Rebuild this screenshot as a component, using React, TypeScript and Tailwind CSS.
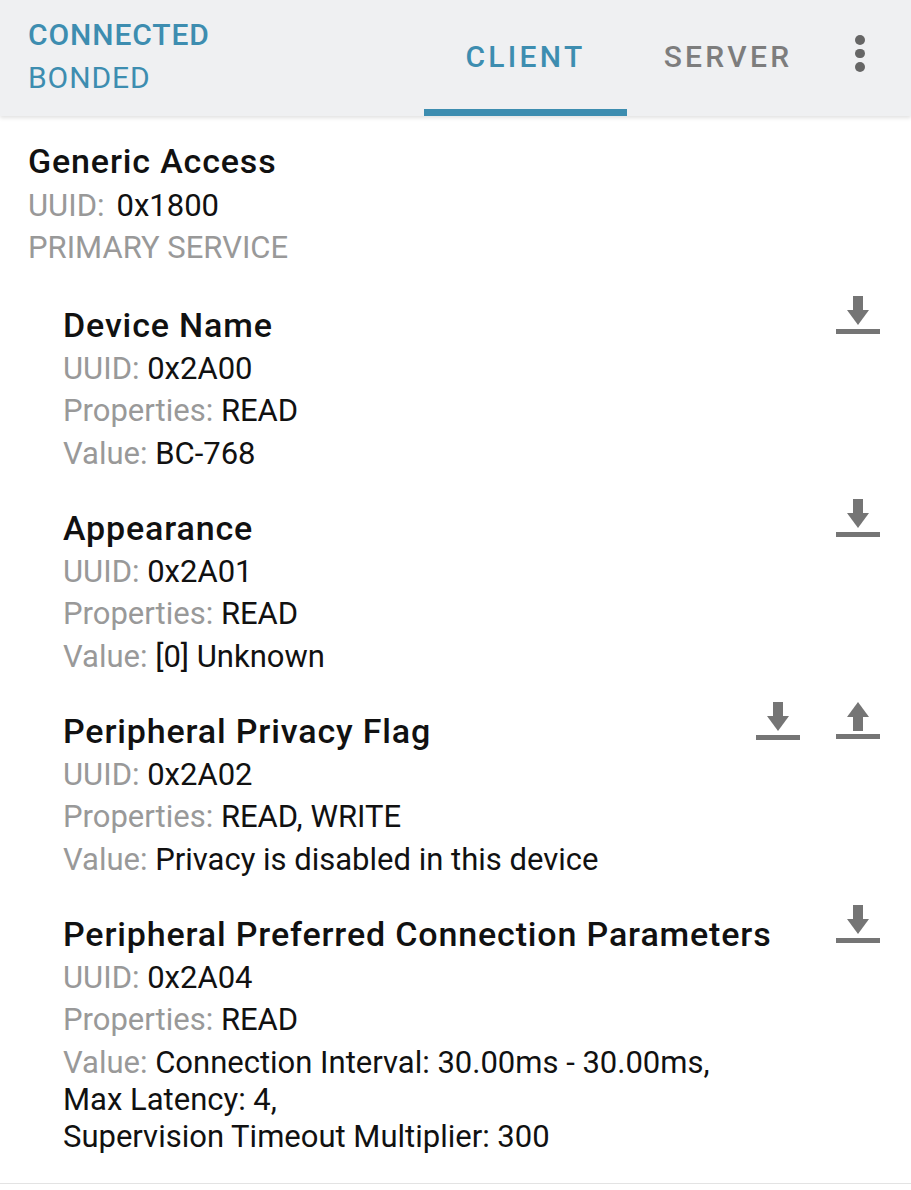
import React from "react";

const DownloadIcon = () => (
  <svg width="44" height="38" viewBox="0 0 44 38" className="block">
    <rect x="17" y="0" width="10" height="15" fill="#757575" />
    <polygon points="11,14 33,14 22,29" fill="#757575" />
    <rect x="0" y="33" width="44" height="5" fill="#757575" />
  </svg>
);

const UploadIcon = () => (
  <svg width="44" height="38" viewBox="0 0 44 38" className="block">
    <polygon points="22,0 33,15 11,15" fill="#757575" />
    <rect x="17" y="14" width="10" height="15" fill="#757575" />
    <rect x="0" y="32" width="44" height="5" fill="#757575" />
  </svg>
);

type Char = {
  name: string;
  uuid: string;
  props: string;
  value: string[];
  write?: boolean;
};

const chars: Char[] = [
  { name: "Device Name", uuid: "0x2A00", props: "READ", value: ["BC-768"] },
  { name: "Appearance", uuid: "0x2A01", props: "READ", value: ["[0] Unknown"] },
  {
    name: "Peripheral Privacy Flag",
    uuid: "0x2A02",
    props: "READ, WRITE",
    value: ["Privacy is disabled in this device"],
    write: true,
  },
  {
    name: "Peripheral Preferred Connection Parameters",
    uuid: "0x2A04",
    props: "READ",
    value: [
      "Connection Interval: 30.00ms - 30.00ms,",
      "Max Latency: 4,",
      "Supervision Timeout Multiplier: 300",
    ],
  },
];

export default function App() {
  return (
    <div
      className="w-[911px] h-[1190px] bg-white overflow-hidden"
      style={{ fontFamily: "Roboto, 'Noto Sans', sans-serif" }}
    >
      {/* Header */}
      <div className="relative h-[116px] bg-[#eff0f2] flex items-stretch shadow-[0_2px_4px_rgba(0,0,0,0.12)] z-10">
        <div className="flex flex-col justify-center pl-[28px] pb-[5px] w-[424px]">
          <div className="text-[30px] leading-[43px] font-medium text-[#3d8db0] tracking-[0.03em]">CONNECTED</div>
          <div className="text-[30px] leading-[43px] text-[#3d8db0] tracking-[0.03em]">BONDED</div>
        </div>
        <div className="relative w-[203px] flex items-center justify-center pb-[4px]">
          <span className="text-[30px] font-medium tracking-[0.11em] text-[#3d8db0]">CLIENT</span>
          <div className="absolute left-0 right-0 bottom-0 h-[7px] bg-[#3d8db0]" />
        </div>
        <div className="w-[202px] flex items-center justify-center pb-[4px]">
          <span className="text-[30px] font-medium tracking-[0.11em] text-[#7d7d7d]">SERVER</span>
        </div>
        <div className="flex-1 flex flex-col items-center justify-center gap-[4px] pr-[20px] pb-[9px]">
          <span className="block w-[9.5px] h-[9.5px] rounded-full bg-[#666]" />
          <span className="block w-[9.5px] h-[9.5px] rounded-full bg-[#666]" />
          <span className="block w-[9.5px] h-[9.5px] rounded-full bg-[#666]" />
        </div>
      </div>

      {/* Content */}
      <div className="border-b border-[#e3e3e3] pb-[28px] pt-[23px]">
        <div className="pl-[28px]">
          <div className="text-[34px] leading-[44px] font-medium text-[#111] tracking-[0.025em]">Generic Access</div>
          <div className="text-[31px] leading-[42px] mt-[2px]">
            <span className="text-[#999]">UUID:</span>
            <span className="text-[#111] ml-[12px]">0x1800</span>
          </div>
          <div className="text-[31px] leading-[42px] text-[#999]">PRIMARY SERVICE</div>
        </div>

        <div className="mt-[34px] flex flex-col gap-[34px]">
          {chars.map((c) => (
            <div key={c.name} className="flex pl-[63px] pr-[31px]">
              <div className="flex-1">
                <div className="text-[34px] leading-[44px] font-medium text-[#111] tracking-[0.025em]">{c.name}</div>
                <div className="text-[31px] leading-[42px] mt-[1px]">
                  <span className="text-[#999]">UUID: </span>
                  <span className="text-[#111]">{c.uuid}</span>
                </div>
                <div className="text-[31px] leading-[42px]">
                  <span className="text-[#999]">Properties: </span>
                  <span className="text-[#111]">{c.props}</span>
                </div>
                <div className="text-[31px] leading-[37px] pt-[3px]">
                  {c.value.map((v, i) => (
                    <div key={i}>
                      {i === 0 && <span className="text-[#999]">Value: </span>}
                      <span className="text-[#111]">{v}</span>
                    </div>
                  ))}
                </div>
              </div>
              <div className="flex gap-[36px] mt-[-7px]">
                <DownloadIcon />
                {c.write && <UploadIcon />}
              </div>
            </div>
          ))}
        </div>
      </div>
    </div>
  );
}
